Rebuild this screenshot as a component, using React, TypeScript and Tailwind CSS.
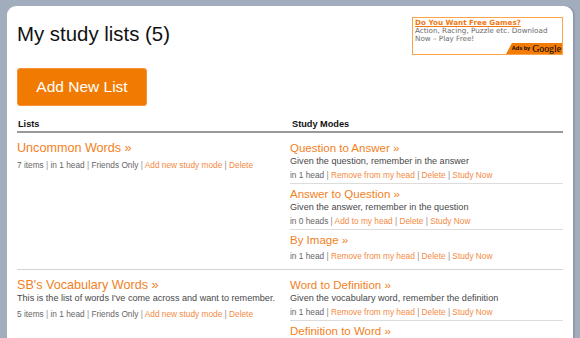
import React from 'react';

type Mode = {
  name: string;
  description?: string;
  heads?: string;
  action?: string;
};

type StudyList = {
  name: string;
  description?: string;
  items: number;
  modes: Mode[];
};

// the last mode is cut off by the bottom of the window, only its title shows
const lists: StudyList[] = [
  {
    name: 'Uncommon Words',
    items: 7,
    modes: [
      {
        name: 'Question to Answer',
        description: 'Given the question, remember in the answer',
        heads: 'in 1 head',
        action: 'Remove from my head',
      },
      {
        name: 'Answer to Question',
        description: 'Given the answer, remember in the question',
        heads: 'in 0 heads',
        action: 'Add to my head',
      },
      { name: 'By Image', heads: 'in 1 head', action: 'Remove from my head' },
    ],
  },
  {
    name: "SB's Vocabulary Words",
    description: "This is the list of words I've come across and want to remember.",
    items: 5,
    modes: [
      {
        name: 'Word to Definition',
        description: 'Given the vocabulary word, remember the definition',
        heads: 'in 1 head',
        action: 'Remove from my head',
      },
      { name: 'Definition to Word' },
    ],
  },
];

function Sep() {
  return <span className="text-[#8a8a99]"> | </span>;
}

function Link({ children }: { children: React.ReactNode }) {
  return <a className="text-[#f38a42] cursor-pointer">{children}</a>;
}

function AdBox() {
  return (
    <div className="w-[151px] h-[38px] border border-[#ffa34a] pt-[1px] font-['DejaVu_Sans',Verdana,sans-serif] text-[7.2px] leading-[8px]">
      <div className="pl-[2px]">
        <a className="font-bold text-[#ef7a14] underline">Do You Want Free Games?</a>
        <p className="text-[#6b6b6b]">Action, Racing, Puzzle etc. Download</p>
        <p className="text-[#6b6b6b]">Now – Play Free!</p>
      </div>
      <div className="flex justify-end">
        <div className="h-[11px] w-[56px] bg-[#f27c06] flex items-center justify-end pr-[1px] gap-[2px] [clip-path:polygon(6px_0,100%_0,100%_100%,0_100%)]">
          <span className="font-['Liberation_Sans',Arial,sans-serif] font-bold text-[5.5px] leading-none text-black">Ads by</span>
          <span className="font-['Liberation_Serif','Times_New_Roman',serif] text-[9.8px] leading-none text-black">Google</span>
        </div>
      </div>
    </div>
  );
}

export default function App() {
  return (
    <div className="h-[338px] w-[580px] overflow-hidden bg-[#a1acbc] pt-[6px] pl-[7px] pr-[7px] font-['Liberation_Sans',Arial,sans-serif]">
      <div className="h-full bg-white rounded-t-[9px] px-[10px] pt-[11px] shadow-[2px_0_0_#8e9aae]">
        <div className="flex items-start justify-between">
          <div>
            <h1 className="mt-[5px] text-[20.4px] leading-[24px] text-[#111]">My study lists (5)</h1>
            <button className="mt-[22px] h-[38px] w-[130px] rounded-[3px] border border-[#f3923a] bg-[#f17b02] text-[15.5px] text-white">
              Add New List
            </button>
          </div>
          <AdBox />
        </div>

        <div className="mt-[12px] grid grid-cols-2 border-b-2 border-[#999] pb-[1px] text-[9.2px] font-bold leading-[12px] text-[#111]">
          <div className="pl-[1px]">Lists</div>
          <div className="pl-[2px]">Study Modes</div>
        </div>

        {lists.map((list, i) => (
          <div
            key={list.name}
            className={`grid grid-cols-2 pt-[5px] pb-[5px] ${i > 0 ? 'border-t border-[#d4d4d4]' : ''}`}
          >
            <div className="pt-[3px]">
              <a className="block text-[12.6px] leading-[14px] text-[#f27f1e]">{list.name} »</a>
              {list.description && (
                <p className="text-[9.1px] leading-[12px] text-[#484848]">{list.description}</p>
              )}
              <p className="mt-[4px] text-[8.3px] leading-[12px] text-[#666]">
                {list.items} items<Sep />in 1 head<Sep />Friends Only<Sep />
                <Link>Add new study mode</Link>
                <Sep />
                <Link>Delete</Link>
              </p>
            </div>
            <div>
              {list.modes.map((mode, j) => (
                <div
                  key={mode.name}
                  className={`pt-[3px] pb-[2px] ${j < list.modes.length - 1 ? 'border-b border-[#dcdcdc]' : ''}`}
                >
                  <a className="block text-[11.5px] leading-[14px] text-[#f27f1e]">{mode.name} »</a>
                  {mode.description && (
                    <p className="text-[9.1px] leading-[12px] text-[#484848]">{mode.description}</p>
                  )}
                  {mode.heads && (
                    <p className={`${mode.description ? 'mt-[2px]' : 'mt-[3px]'} text-[8.3px] leading-[12px] text-[#666]`}>
                      {mode.heads}
                      <Sep />
                      <Link>{mode.action}</Link>
                      <Sep />
                      <Link>Delete</Link>
                      <Sep />
                      <Link>Study Now</Link>
                    </p>
                  )}
                </div>
              ))}
            </div>
          </div>
        ))}
      </div>
    </div>
  );
}
